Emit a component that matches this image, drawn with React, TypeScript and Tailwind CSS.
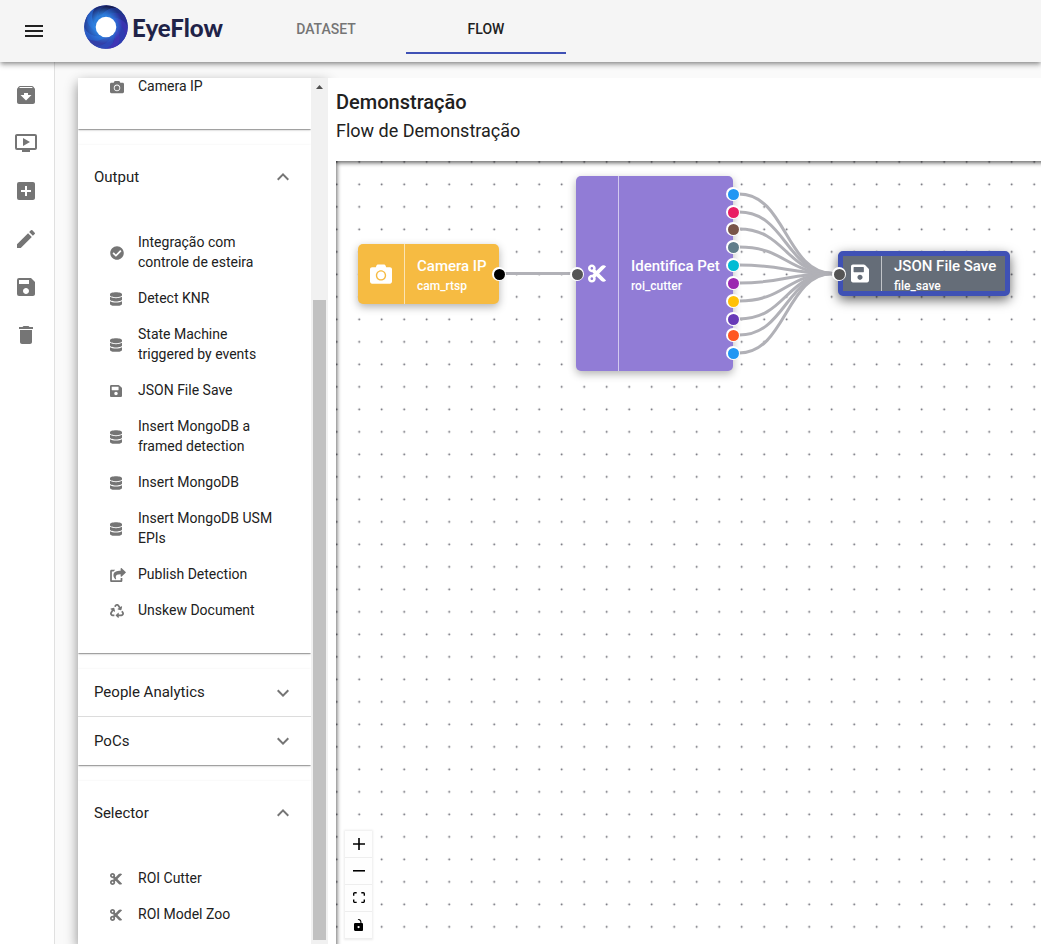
import React from "react";
import {
  MdAddBox,
  MdArchive,
  MdDelete,
  MdEdit,
  MdExpandLess,
  MdExpandMore,
  MdMenu,
  MdOndemandVideo,
  MdSave,
} from "react-icons/md";
import {
  FaCamera,
  FaCheckCircle,
  FaCut,
  FaDatabase,
  FaRecycle,
  FaSave,
  FaShareSquare,
} from "react-icons/fa";

type IconType = React.ComponentType<{ className?: string }>;
type Action = { label: string; icon: IconType };
type Item = Action & { size: string };

const railActions: Action[] = [
  { label: "Archive", icon: MdArchive },
  { label: "Preview", icon: MdOndemandVideo },
  { label: "Add", icon: MdAddBox },
  { label: "Edit", icon: MdEdit },
  { label: "Save", icon: MdSave },
  { label: "Delete", icon: MdDelete },
];

const narrow = "h-3.5 w-3";
const square = "h-3.5 w-3.5";
const wide = "h-3.5 w-4";

const outputItems: Item[] = [
  { label: "Integração com controle de esteira", icon: FaCheckCircle, size: square },
  { label: "Detect KNR", icon: FaDatabase, size: narrow },
  { label: "State Machine triggered by events", icon: FaDatabase, size: narrow },
  { label: "JSON File Save", icon: FaSave, size: narrow },
  { label: "Insert MongoDB a framed detection", icon: FaDatabase, size: narrow },
  { label: "Insert MongoDB", icon: FaDatabase, size: narrow },
  { label: "Insert MongoDB USM EPIs", icon: FaDatabase, size: narrow },
  { label: "Publish Detection", icon: FaShareSquare, size: wide },
  { label: "Unskew Document", icon: FaRecycle, size: square },
];

const selectorItems: Item[] = [
  { label: "ROI Cutter", icon: FaCut, size: narrow },
  { label: "ROI Model Zoo", icon: FaCut, size: narrow },
];

const panelShadow =
  "shadow-[0_2px_1px_-1px_rgba(0,0,0,0.2),0_1px_1px_0_rgba(0,0,0,0.14),0_1px_3px_0_rgba(0,0,0,0.12)]";

const bladeTones = [
  "#2a2f96",
  "#3a33b0",
  "#2e3bb0",
  "#3f35b5",
  "#2f49b8",
  "#3340a8",
  "#2a5cc4",
  "#2545a0",
  "#2459bd",
  "#1c2870",
  "#171d52",
  "#1f3488",
];

function Logo() {
  return (
    <a href="#home" className="flex items-center gap-1">
      <svg viewBox="0 0 44 44" className="size-11" aria-hidden="true">
        <defs>
          <radialGradient id="glow" cx="0.45" cy="0.45" r="0.5">
            <stop offset="0.45" stopColor="#2f86e6" stopOpacity="0.9" />
            <stop offset="0.85" stopColor="#2f86e6" stopOpacity="0" />
          </radialGradient>
        </defs>
        <circle cx="22" cy="22" r="21.800" fill="#2a3fa8" />
        {bladeTones.map((tone, i) => (
          <path
            key={tone}
            d="M22 11.500Q33 5 40.900 11.100A21.800 21.800 0 0 1 43.800 22Q38 11.500 27.250 12.900Z"
            fill={tone}
            transform={`rotate(${i * 30} 22 22)`}
          />
        ))}
        <circle cx="22" cy="22" r="21.800" fill="url(#glow)" />
        <circle cx="22" cy="22" r="10.300" fill="#fff" />
      </svg>
      <span className="pt-0.5 font-['Lato'] text-2xl font-black text-[#1f2348]">EyeFlow</span>
    </a>
  );
}

function ItemList({ items }: { items: Item[] }) {
  return (
    <ul className="pt-[15px] pb-[25px]">
      {items.map(({ label, icon: Icon, size }) => (
        <li key={label}>
          <button type="button" className="flex w-full items-center px-8 py-2 text-left">
            <span className="flex w-7 shrink-0 pt-0.5 text-[#757575]">
              <Icon className={size} />
            </span>
            <span className="text-sm leading-5">{label}</span>
          </button>
        </li>
      ))}
    </ul>
  );
}

function Section({ title, items }: { title: string; items?: Item[] }) {
  const Chevron = items ? MdExpandLess : MdExpandMore;
  return (
    <>
      <button
        type="button"
        aria-expanded={!!items}
        className={`flex w-full items-center justify-between px-4 text-[15px] ${items ? "h-16" : "h-12"}`}
      >
        {title}
        <Chevron className="size-6 text-[#757575]" />
      </button>
      {items && <ItemList items={items} />}
    </>
  );
}

function Palette() {
  return (
    <aside className="flex w-[250px] shrink-0 shadow-[0_5px_12px_rgba(0,0,0,0.45)]">
      <div className="min-w-0 flex-1 overflow-hidden bg-white">
        <div className={`bg-white ${panelShadow}`}>
          <div className="-mt-[25px]">
            <ItemList items={[{ label: "Camera IP", icon: FaCamera, size: square }]} />
          </div>
        </div>
        <div className={`mt-4 bg-white ${panelShadow}`}>
          <Section title="Output" items={outputItems} />
        </div>
        <div className={`mt-4 divide-y divide-[#dcdcdc] bg-white ${panelShadow}`}>
          <Section title="People Analytics" />
          <Section title="PoCs" />
        </div>
        <div className={`mt-4 bg-white ${panelShadow}`}>
          <Section title="Selector" items={selectorItems} />
        </div>
      </div>
      <div className="flex w-[17px] flex-col items-center bg-[#f1f1f1] pb-1">
        <svg viewBox="0 0 17 17" className="size-[17px]" aria-hidden="true">
          <path d="M5 11h7l-3.500-4z" fill="#505050" />
        </svg>
        <div className="h-[205px] shrink-0" />
        <div className="w-[13px] flex-1 bg-[#c1c1c1]" />
      </div>
    </aside>
  );
}

const ports = [
  { y: 33, color: "bg-[#2196f3]" },
  { y: 51, color: "bg-[#e91e63]" },
  { y: 68, color: "bg-[#795548]" },
  { y: 86, color: "bg-[#607d8b]" },
  { y: 104, color: "bg-[#00bcd4]" },
  { y: 122, color: "bg-[#9c27b0]" },
  { y: 140, color: "bg-[#ffc107]" },
  { y: 158, color: "bg-[#673ab7]" },
  { y: 174, color: "bg-[#ff5722]" },
  { y: 192, color: "bg-[#2196f3]" },
];

function Port({ x, y, color }: { x: number; y: number; color: string }) {
  return (
    <span
      className="absolute flex size-3.5 -translate-x-1/2 -translate-y-1/2 items-center justify-center rounded-full bg-white"
      style={{ left: x, top: y }}
    >
      <span className={`size-[11px] rounded-full ${color}`} />
    </span>
  );
}

function FlowNode({
  className,
  icon: Icon,
  iconBox,
  iconSize,
  title,
  type,
}: {
  className: string;
  icon: IconType;
  iconBox: string;
  iconSize: string;
  title: string;
  type: string;
}) {
  return (
    <div className={`absolute flex rounded-[5px] text-white ${className}`}>
      <div className={`flex shrink-0 items-center justify-center border-r border-white/60 ${iconBox}`}>
        <Icon className={iconSize} />
      </div>
      <div className="flex flex-col justify-center pt-1 pl-3 whitespace-nowrap">
        <span className="text-[15px] leading-5 font-medium">{title}</span>
        <span className="text-xs leading-5 font-medium">{type}</span>
      </div>
    </div>
  );
}

function Controls() {
  const button = "flex size-[27px] items-center justify-center border-b border-[#eee] bg-[#fefefe]";
  return (
    <div className="absolute bottom-[5px] left-[9px] shadow-[0_0_2px_1px_rgba(0,0,0,0.08)]">
      <button type="button" aria-label="Zoom in" className={button}>
        <svg viewBox="0 0 32 32" className="size-3">
          <path d="M32 18.133H18.133V32h-4.266V18.133H0v-4.266h13.867V0h4.266v13.867H32z" />
        </svg>
      </button>
      <button type="button" aria-label="Zoom out" className={button}>
        <svg viewBox="0 0 32 5" className="w-3">
          <path d="M0 0h32v4.200H0z" />
        </svg>
      </button>
      <button type="button" aria-label="Fit view" className={button}>
        <svg viewBox="0 0 32 30" className="w-3">
          <path d="M3.692 4.630c0-.53.4-.938.939-.938h5.215V0H4.708C2.130 0 0 2.054 0 4.630v5.216h3.692V4.631zM27.354 0h-5.200v3.692h5.170c.53 0 .984.400.984.939v5.215H32V4.631A4.624 4.624 0 0027.354 0zm.954 24.830c0 .532-.400.940-.939.940h-5.215v3.768h5.215c2.577 0 4.631-2.130 4.631-4.707v-5.139h-3.692v5.139zm-23.677.940c-.531 0-.939-.400-.939-.940v-5.138H0v5.139c0 2.577 2.130 4.707 4.708 4.707h5.138V25.770H4.631z" />
        </svg>
      </button>
      <button type="button" aria-label="Toggle interactivity" className={button}>
        <svg viewBox="0 0 25 32" className="h-3">
          <path d="M21.333 10.667H19.810V7.619C19.810 3.429 16.380 0 12.190 0c-4.114 1.828-1.370 2.133.305 2.438 1.676.305 4.420 2.590 4.420 5.181v3.048H3.047A3.056 3.056 0 000 13.714v15.238A3.056 3.056 0 003.048 32h18.285a3.056 3.056 0 003.048-3.048V13.714a3.056 3.056 0 00-3.048-3.047zM12.190 24.533a3.056 3.056 0 01-3.047-3.047 3.056 3.056 0 013.047-3.048 3.056 3.056 0 013.048 3.048 3.056 3.056 0 01-3.048 3.047z" />
        </svg>
      </button>
    </div>
  );
}

function Canvas() {
  return (
    <div className="relative ml-2 flex-1 overflow-hidden">
      <svg className="absolute inset-0 size-full" aria-hidden="true">
        <defs>
          <pattern id="grid" width="22.500" height="22.500" x="11.950" y="12.100" patternUnits="userSpaceOnUse">
            <circle cx="11.250" cy="11.250" r="0.900" fill="#5c5c66" />
          </pattern>
        </defs>
        <rect width="100%" height="100%" fill="url(#grid)" />
        <g fill="none" stroke="#b1b1b7" strokeWidth="3">
          <path d="M169 112.500H236" />
          {ports.map(({ y }) => (
            <path key={y} d={`M403 ${y}C450 ${y} 450 112.500 497 112.500`} />
          ))}
        </g>
      </svg>
      <div className="pointer-events-none absolute top-0 -right-2 -bottom-2 left-0 shadow-[inset_1px_2px_4px_rgba(0,0,0,0.6)]" />

      <FlowNode
        className="top-[83px] left-[22px] h-[60px] w-[141px] bg-[#f6bb42] shadow-[0_3px_8px_rgba(0,0,0,0.3)]"
        iconBox="w-[47px]"
        iconSize="size-[22px]"
        icon={FaCamera}
        title="Camera IP"
        type="cam_rtsp"
      />
      <FlowNode
        className="top-[15px] left-[240px] h-[195px] w-[157px] bg-[#917cd6] shadow-[0_3px_8px_rgba(0,0,0,0.3)]"
        iconBox="w-[43px]"
        iconSize="h-[21px] w-[18px]"
        icon={FaCut}
        title="Identifica Pet"
        type="roi_cutter"
      />
      <FlowNode
        className="top-[90px] left-[502px] h-[45px] w-[172px] border-[5px] border-[#3f51b5] bg-[#656d78] shadow-[0_4px_12px_rgba(0,0,0,0.6)]"
        iconBox="w-[39px] pr-1"
        iconSize="h-[21px] w-[18px]"
        icon={FaSave}
        title="JSON File Save"
        type="file_save"
      />

      <Port x={163} y={113} color="bg-black" />
      <Port x={241} y={113} color="bg-[#555]" />
      <Port x={503} y={113} color="bg-[#555]" />
      {ports.map(({ y, color }) => (
        <Port key={y} x={397} y={y} color={color} />
      ))}

      <Controls />
    </div>
  );
}

export default function App() {
  return (
    <div className="flex h-screen flex-col overflow-hidden bg-[#fafafa] font-['Roboto',sans-serif] text-[#212121]">
      <header className="relative z-10 flex h-[62px] shrink-0 items-center bg-[#f5f5f5] shadow-[0_2px_4px_-1px_rgba(0,0,0,0.3),0_4px_5px_0_rgba(0,0,0,0.14),0_1px_6px_0_rgba(0,0,0,0.12)]">
        <button type="button" aria-label="Menu" className="ml-[22px]">
          <MdMenu className="size-6" />
        </button>
        <div className="-mt-2 ml-[38px] w-[162px]">
          <Logo />
        </div>
        <nav className="flex self-stretch pb-2 text-sm font-medium">
          <a
            href="#dataset"
            className="flex w-40 items-center justify-center border-b-2 border-transparent pt-1.5 text-[#757575]"
          >
            DATASET
          </a>
          <a href="#flow" className="flex w-40 items-center justify-center border-b-2 border-[#3f51b5] pt-1.5">
            FLOW
          </a>
        </nav>
      </header>

      <div className="flex min-h-0 flex-1">
        <nav className="flex w-[55px] shrink-0 flex-col items-center gap-6 border-r border-[#e0e0e0] bg-white pt-[21px] pr-[2px] text-[#757575]">
          {railActions.map(({ label, icon: Icon }) => (
            <button key={label} type="button" aria-label={label}>
              <Icon className="size-6" />
            </button>
          ))}
        </nav>

        <div className="flex min-w-0 flex-1 pt-4 pl-[23px]">
          <Palette />
          <main className="relative flex min-w-0 flex-1 flex-col bg-white">
            <div className="px-2 pt-2.5 pb-4">
              <h1 className="text-xl leading-7 font-medium">Demonstração</h1>
              <h2 className="text-lg leading-[29px]">Flow de Demonstração</h2>
            </div>
            <Canvas />
          </main>
        </div>
      </div>
    </div>
  );
}
